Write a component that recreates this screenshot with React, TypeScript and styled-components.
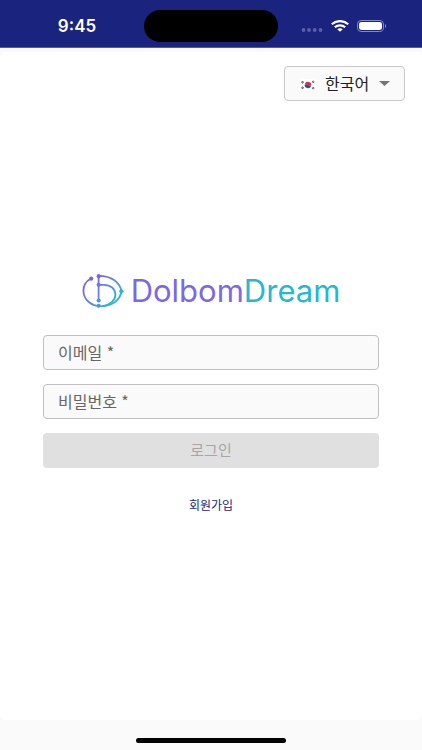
import React, { useState } from "react";
import styled, { createGlobalStyle } from "styled-components";

const GlobalStyle = createGlobalStyle`
  *, *::before, *::after { box-sizing: border-box; }
  body {
    margin: 0;
    background: #fafafa;
    font-family: "Liberation Sans", "Noto Sans CJK KR", sans-serif;
  }
`;

const Screen = styled.div`
  min-height: 100vh;
  display: flex;
  flex-direction: column;
`;

const StatusBar = styled.header`
  display: grid;
  grid-template-columns: 1fr 134px 1fr;
  align-items: center;
  height: 48px;
  padding-top: 4px;
  background: #1a237e;
  border-bottom: 1px solid #5c569f;
`;

const Clock = styled.time`
  padding-left: 10px;
  text-align: center;
  font: 600 17px/20px Inter, sans-serif;
  color: #fff;
`;

const Island = styled.div`
  height: 32px;
  border-radius: 16px;
  background: #000;
`;

const StatusIcons = styled.div`
  display: flex;
  align-items: center;
  justify-content: flex-end;
  gap: 8px;
  padding-right: 35px;
`;

const Card = styled.main`
  flex: 1;
  display: flex;
  flex-direction: column;
  margin-top: 4px;
  padding: 14px 17px 0 18px;
  border-radius: 6px;
  background: #fff;
`;

const LanguagePicker = styled.div`
  display: grid;
  grid-template-columns: 16px 1fr 11px;
  align-items: center;
  align-self: flex-end;
  width: 121px;
  height: 35px;
  padding: 0 14px 0 15px;
  border: 1px solid #c8c8c8;
  border-radius: 4px;
  background: #fafafa;
`;

const LanguageSelect = styled.select`
  grid-row: 1;
  grid-column: 1 / -1;
  width: 100%;
  height: 33px;
  padding: 0 0 1px 25px;
  border: 0;
  outline: 0;
  appearance: none;
  background: transparent;
  font: 400 16px/24px "Noto Sans CJK KR", sans-serif;
  color: #212121;
`;

const FlagIcon = styled.svg`
  grid-area: 1 / 1;
  margin-top: 3px;
  pointer-events: none;
`;

const CaretIcon = styled.svg`
  grid-area: 1 / 3;
  pointer-events: none;
`;

const LoginForm = styled.form`
  flex: 1;
  display: flex;
  flex-direction: column;
  gap: 14px;
  padding: 169px 26px 0 25px;
`;

const Brand = styled.h1`
  display: flex;
  align-items: center;
  justify-content: center;
  gap: 6px;
  margin: 0 0 10px;
  font: 400 31px/41px Inter, sans-serif;
  color: #7b68e6;
`;

const BrandAccent = styled.span`
  color: #25b8d0;
`;

const Field = styled.div`
  display: grid;
  align-items: center;
`;

const FieldInput = styled.input`
  grid-area: 1 / 1;
  width: 100%;
  height: 35px;
  padding: 0 14px;
  border: 1px solid #c0c0c0;
  border-radius: 4px;
  background: #fafafa;
  font: 400 15px/24px "Noto Sans CJK KR", sans-serif;
  color: #212121;

  &:focus {
    outline: 1px solid #1a237e;
  }
`;

const FieldLabel = styled.label<{ $filled: boolean }>`
  grid-area: 1 / 1;
  z-index: 1;
  padding: 0 0 2px 15px;
  font: 400 16px/24px "Noto Sans CJK KR", sans-serif;
  color: #666;
  pointer-events: none;
  visibility: ${({ $filled }) => ($filled ? "hidden" : "visible")};
`;

const LoginButton = styled.button`
  height: 35px;
  padding: 0 0 2px;
  border: 0;
  border-radius: 4px;
  background: #e0e0e0;
  font: 400 15px/24px "Noto Sans CJK KR", sans-serif;
  color: #a6a6a6;

  &:enabled {
    background: #1a237e;
    color: #fff;
  }
`;

const SignUpLink = styled.a`
  align-self: center;
  margin-top: 14px;
  font: 400 12px/18px "Noto Sans CJK KR", sans-serif;
  color: #1a237e;
  text-decoration: none;
`;

const HomeBar = styled.footer`
  display: flex;
  justify-content: center;
  height: 30px;
  padding-top: 18px;
`;

const HomeIndicator = styled.div`
  width: 150px;
  height: 5px;
  border-radius: 3px;
  background: #000;
`;

const CellularDots = () => (
  <svg width="22" height="18" viewBox="0 0 22 18" fill="#5a60a8" aria-hidden="true">
    {[2.5, 8, 13.7, 19.5].map((x) => (
      <circle key={x} cx={x} cy="13" r="1.9" />
    ))}
  </svg>
);

const WifiIcon = () => (
  <svg width="18" height="12" viewBox="0 0 18 12" fill="none" stroke="#fff" strokeWidth="2.2" aria-hidden="true">
    <path d="M.8 4.3C5.4 0 12.6 0 17.2 4.3" />
    <path d="M3.8 7.3c2.9-2.7 7.5-2.7 10.4 0" />
    <path d="M9 11.8 6.2 9.2c1.6-1.3 4-1.3 5.6 0z" fill="#fff" stroke="none" />
  </svg>
);

const BatteryIcon = () => (
  <svg width="30" height="12" viewBox="0 0 30 12" aria-hidden="true">
    <rect x=".5" y=".5" width="26" height="11" rx="3.6" fill="none" stroke="#8589c1" />
    <rect x="2" y="2" width="23" height="8" rx="2.4" fill="#fff" />
    <path d="M28 4c1.6.5 1.6 3.5 0 4z" fill="#8589c1" />
  </svg>
);

const KoreanFlag = () => (
  <FlagIcon width="16" height="12" viewBox="0 0 16 12" aria-hidden="true">
    <rect width="16" height="12" rx="1" fill="#fff" />
    <path d="M4.7 6a3.3 3.1 0 0 1 6.6 0z" fill="#d22f43" transform="rotate(14 8 6)" />
    <path d="M4.7 6a3.3 3.1 0 0 0 6.6 0z" fill="#264f9e" transform="rotate(14 8 6)" />
    <g stroke="#444" strokeWidth="2.2" strokeDasharray=".8 .4">
      <path d="m1.8 3.9 1.8-1.7M12.4 2.2l1.8 1.7M1.8 8.1l1.8 1.7M12.4 9.8l1.8-1.7" />
    </g>
  </FlagIcon>
);

const Caret = () => (
  <CaretIcon width="11" height="5" viewBox="0 0 11 5" aria-hidden="true">
    <path d="M0 0h11L5.5 5z" fill="#757575" />
  </CaretIcon>
);

const BrandMark = () => (
  <svg width="43" height="34" viewBox="0 0 43 34" fill="none" aria-hidden="true">
    <defs>
      <linearGradient id="mark" gradientUnits="userSpaceOnUse" x1="10" y1="5" x2="35" y2="30">
        <stop offset="0" stopColor="#7b63e0" />
        <stop offset=".5" stopColor="#5e8bdc" />
        <stop offset="1" stopColor="#18c6cf" />
      </linearGradient>
    </defs>
    <g stroke="url(#mark)" strokeWidth="1.8">
      <path d="M9 4.5C3.5 7.5 1.2 12 1.4 17c.3 8.5 7.5 15.2 17.4 15.2C29.5 32.2 38 26.5 39.5 17.5 38 8.5 29.5 1.8 17 1.8" />
      <path d="M16.6 2v24.5M16.6 10.8h5.2c7 0 11.6 4 11.6 10 0 5.3-4.8 9.9-12.4 11.3" />
    </g>
    <g fill="url(#mark)">
      <circle cx="9.2" cy="4.7" r="2.1" />
      <circle cx="16.7" cy="2.2" r="2.1" />
      <circle cx="16.7" cy="10.8" r="2.1" />
      <circle cx="16.7" cy="26.5" r="2.1" />
      <circle cx="16.7" cy="31.8" r="2.1" />
      <path d="m36.8 17.3 2.6-2.7 2.6 2.7-2.6 2.7z" />
    </g>
  </svg>
);

type TextFieldProps = {
  id: string;
  label: string;
  type: string;
  value: string;
  onChange: (value: string) => void;
};

const TextField = ({ id, label, type, value, onChange }: TextFieldProps) => (
  <Field>
    <FieldLabel htmlFor={id} $filled={value !== ""}>
      {label} *
    </FieldLabel>
    <FieldInput
      id={id}
      type={type}
      value={value}
      required
      onChange={(event) => onChange(event.target.value)}
    />
  </Field>
);

export default function App() {
  const [email, setEmail] = useState("");
  const [password, setPassword] = useState("");

  return (
    <Screen lang="ko">
      <GlobalStyle />
      <StatusBar>
        <Clock>9:45</Clock>
        <Island />
        <StatusIcons>
          <CellularDots />
          <WifiIcon />
          <BatteryIcon />
        </StatusIcons>
      </StatusBar>
      <Card>
        <LanguagePicker>
          <LanguageSelect aria-label="언어" defaultValue="ko">
            <option value="ko">한국어</option>
          </LanguageSelect>
          <KoreanFlag />
          <Caret />
        </LanguagePicker>
        <LoginForm onSubmit={(event) => event.preventDefault()}>
          <Brand>
            <BrandMark />
            <span>
              Dolbom<BrandAccent>Dream</BrandAccent>
            </span>
          </Brand>
          <TextField id="email" label="이메일" type="email" value={email} onChange={setEmail} />
          <TextField id="password" label="비밀번호" type="password" value={password} onChange={setPassword} />
          <LoginButton type="submit" disabled={!email || !password}>
            로그인
          </LoginButton>
          <SignUpLink href="#signup">회원가입</SignUpLink>
        </LoginForm>
      </Card>
      <HomeBar>
        <HomeIndicator />
      </HomeBar>
    </Screen>
  );
}
